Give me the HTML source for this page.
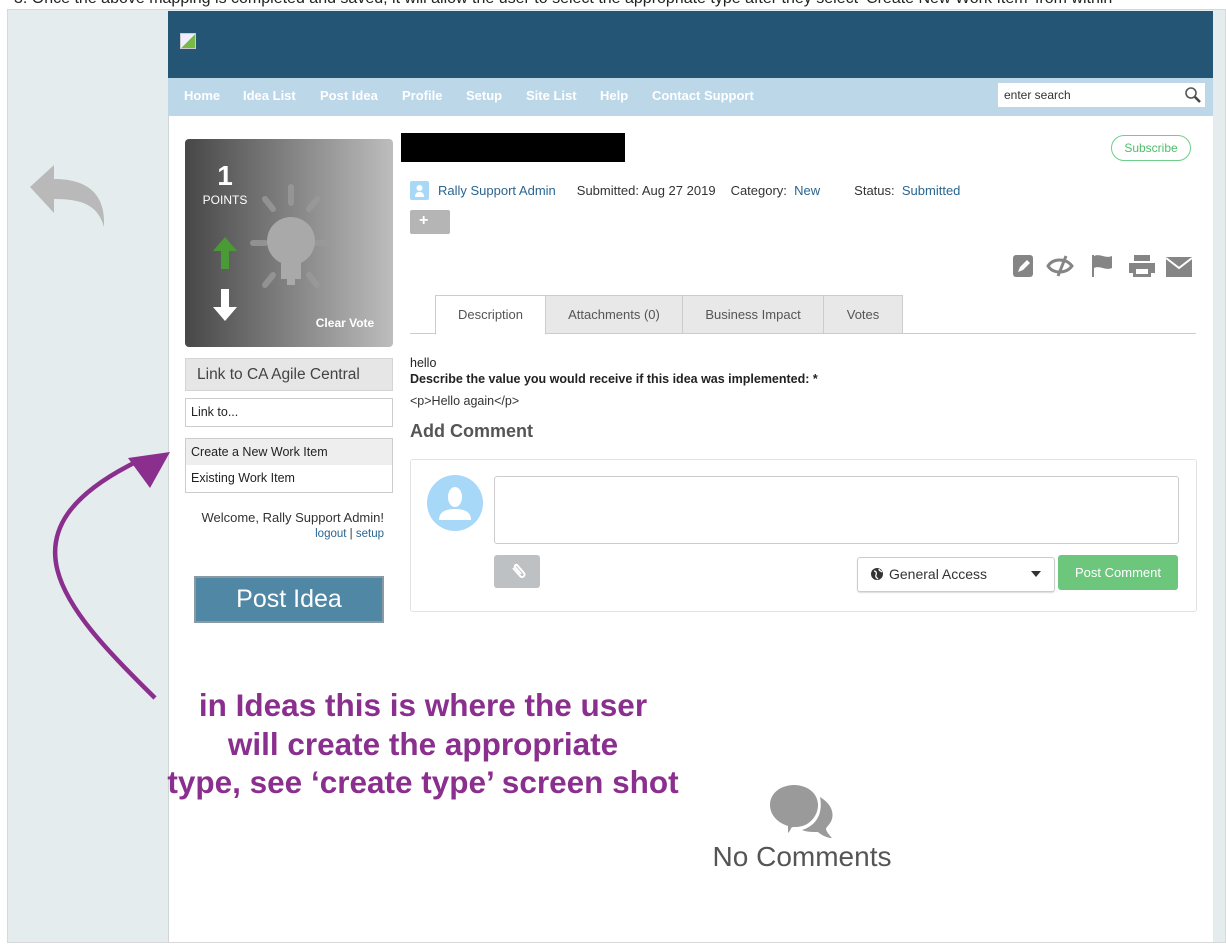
<!DOCTYPE html>
<html><head><meta charset="utf-8"><style>
*{margin:0;padding:0;box-sizing:border-box}
body{width:1226px;height:950px;position:relative;overflow:hidden;background:#fff;font-family:"Liberation Sans",Arial,sans-serif;color:#333}
.a{position:absolute}
.nav span{position:absolute;top:88px;color:#fff;font-weight:bold;font-size:13px}
.tab{position:absolute;top:295px;height:39px;border:1px solid #ccc;background:#e8e8e8;font-size:13px;color:#555;text-align:center;line-height:38px}
</style></head><body>
<div class="a" style="left:14px;top:-10px;font-size:16px;color:#222;white-space:nowrap">3. Once the above mapping is completed and saved, it will allow the user to select the appropriate type after they select ‘Create New Work Item’ from within</div>
<div class="a" style="left:7px;top:9px;width:1219px;height:934px;border:1px solid #d8d8d8;background:#e5ecee"></div>
<div class="a" style="left:168px;top:11px;width:1045px;height:931px;background:#fff;border-left:1px solid #d0d6d8"></div>
<div class="a" style="left:168px;top:11px;width:1045px;height:67px;background:#245574"></div>
<div class="a" style="left:180px;top:33px;width:16px;height:16px;background:linear-gradient(135deg,#eef 50%,#7b4 50%);border:1px solid #ccc"></div>
<div class="a" style="left:168px;top:78px;width:1045px;height:38px;background:#bcd7e8"></div>
<div class="nav"><span style="left:184px">Home</span><span style="left:243px">Idea List</span><span style="left:320px">Post Idea</span><span style="left:402px">Profile</span><span style="left:466px">Setup</span><span style="left:526px">Site List</span><span style="left:600px">Help</span><span style="left:652px">Contact Support</span></div>
<div class="a" style="left:998px;top:83px;width:207px;height:24px;background:#fff;font-size:12px;line-height:24px;padding-left:6px;color:#333">enter search</div>
<svg class="a" style="left:1184px;top:86px" width="18" height="18"><circle cx="7" cy="7" r="5" fill="none" stroke="#555" stroke-width="1.6"/><path d="M11 11l5 5" stroke="#444" stroke-width="2.5"/></svg>
<svg class="a" style="left:26px;top:160px" width="80" height="70"><path d="M4 27L28 5v14c30 0 52 12 50 48c-6-22-22-28-50-28v14z" fill="#b9b9b9"/></svg>
<div class="a" style="left:185px;top:139px;width:208px;height:208px;border-radius:4px;background:linear-gradient(90deg,#474747,#bdbdbd)"></div>
<svg class="a" style="left:185px;top:139px" width="208" height="208">
<g stroke="#9a9a9a" stroke-width="6" stroke-linecap="round" opacity=".8"><path d="M106 48v16M80 60l8 10M132 60l-8 10M68 104h12M132 104h12M80 146l8-10M132 146l-8-10"/></g>
<circle cx="106" cy="102" r="24" fill="#a9a9a9"/><rect x="96" y="120" width="20" height="20" fill="#a9a9a9"/><rect x="102" y="140" width="8" height="6" fill="#a9a9a9"/>
<path d="M40 98l-12 14h8v18h8v-18h8z" fill="#4a9a36"/>
<path d="M36 150v18h-8l12 14 12-14h-8v-18z" fill="#fff"/>
<text x="40" y="46" font-size="28" font-weight="bold" fill="#fff" text-anchor="middle" font-family="Liberation Sans">1</text>
<text x="40" y="65" font-size="12" fill="#fff" text-anchor="middle" font-family="Liberation Sans">POINTS</text>
<text x="160" y="188" font-size="12" font-weight="bold" fill="#fff" text-anchor="middle" font-family="Liberation Sans">Clear Vote</text>
</svg>
<div class="a" style="left:185px;top:358px;width:208px;height:33px;background:#e6e6e6;border:1px solid #d4d4d4;font-size:15.5px;line-height:32px;padding-left:11px;color:#444">Link to CA Agile Central</div>
<div class="a" style="left:185px;top:398px;width:208px;height:29px;border:1px solid #ccc;font-size:12.5px;line-height:27px;padding-left:5px;color:#222">Link to...</div>
<div class="a" style="left:185px;top:438px;width:208px;height:55px;border:1px solid #ccc;font-size:12.5px;color:#222">
<div style="height:26px;background:#eee;line-height:26px;padding-left:5px">Create a New Work Item</div>
<div style="height:27px;line-height:27px;padding-left:5px">Existing Work Item</div></div>
<div class="a" style="left:185px;top:510px;width:199px;text-align:right;font-size:13px;color:#333">Welcome, Rally Support Admin!</div>
<div class="a" style="left:185px;top:528px;width:199px;text-align:right;font-size:11.5px;color:#333"><span style="color:#2a6590">logout</span> | <span style="color:#2a6590">setup</span></div>
<div class="a" style="left:194px;top:576px;width:190px;height:47px;background:#4f87a5;border:2px solid #8a9aa4;color:#fff;font-size:25px;text-align:center;line-height:43px">Post Idea</div>
<div class="a" style="left:401px;top:133px;width:224px;height:29px;background:#000"></div>
<div class="a" style="left:1111px;top:135px;width:80px;height:26px;border:1px solid #6dd08a;border-radius:13px;color:#4cbf6a;font-size:12px;text-align:center;line-height:24px">Subscribe</div>
<div class="a" style="left:410px;top:181px;width:19px;height:19px;background:#a8d8f8;border-radius:2px"></div>
<svg class="a" style="left:410px;top:181px" width="19" height="19"><circle cx="9.5" cy="7" r="3" fill="#fff"/><path d="M5 16c0-4 2-5 4.5-5s4.5 1 4.5 5z" fill="#fff"/></svg>
<div class="a" style="left:438px;top:183px;font-size:13px;white-space:nowrap;color:#333"><span style="color:#2a6590">Rally Support Admin</span><span style="margin-left:21px">Submitted: Aug 27 2019</span><span style="margin-left:15px">Category:&nbsp; <span style="color:#2a6590">New</span></span><span style="margin-left:34px">Status:&nbsp; <span style="color:#2a6590">Submitted</span></span></div>
<div class="a" style="left:410px;top:210px;width:40px;height:24px;background:#b5b5b5;border-radius:2px;color:#fff;font-weight:bold;font-size:16px;line-height:22px;padding-left:9px">+</div>
<svg class="a" style="left:1010px;top:252px" width="185" height="28" fill="#858585">
<rect x="3" y="3" width="20" height="22" rx="3"/><path d="M8 20l2-5 7-7 3 3-7 7z" fill="#fff"/>
<path d="M38 14c5-8 18-8 24 0c-6 8-19 8-24 0z" fill="none" stroke="#858585" stroke-width="3"/><path d="M48 24l8-20" stroke="#858585" stroke-width="3"/>
<path d="M82 3v22h2V16c6-3 11 3 18 0V4c-7 3-12-3-18 0V3z"/>
<path d="M124 9h16v-6h-16zM119 11h26v10h-4v4h-18v-4h-4z"/><rect x="126" y="17" width="12" height="5" fill="#fff"/>
<path d="M156 5h26v20h-26z"/><path d="M156 6l13 10 13-10" fill="none" stroke="#fff" stroke-width="2"/>
</svg>
<div class="a" style="left:410px;top:333px;width:786px;height:1px;background:#ccc"></div>
<div class="tab" style="left:435px;width:111px;background:#fff;border-bottom-color:#fff;height:40px">Description</div>
<div class="tab" style="left:545px;width:138px">Attachments (0)</div>
<div class="tab" style="left:682px;width:142px">Business Impact</div>
<div class="tab" style="left:823px;width:80px">Votes</div>
<div class="a" style="left:410px;top:356px;font-size:12.5px;color:#222">hello</div>
<div class="a" style="left:410px;top:372px;font-size:12.5px;font-weight:bold;color:#222">Describe the value you would receive if this idea was implemented: *</div>
<div class="a" style="left:410px;top:394px;font-size:12.5px;color:#333">&lt;p&gt;Hello again&lt;/p&gt;</div>
<div class="a" style="left:410px;top:421px;font-size:18px;font-weight:bold;color:#555">Add Comment</div>
<div class="a" style="left:410px;top:459px;width:787px;height:153px;border:1px solid #e2e2e2;border-radius:3px"></div>
<svg class="a" style="left:427px;top:475px" width="56" height="56"><circle cx="28" cy="28" r="28" fill="#a8d8f8"/><ellipse cx="28" cy="22" rx="7" ry="10" fill="#fff"/><path d="M12 45c0-9 8-11 16-11s16 2 16 11z" fill="#fff"/></svg>
<div class="a" style="left:494px;top:476px;width:685px;height:68px;border:1px solid #ccc;border-radius:3px"></div>
<div class="a" style="left:494px;top:555px;width:46px;height:33px;background:#bdc1c4;border-radius:3px"></div>
<svg class="a" style="left:509px;top:562px" width="18" height="18"><path d="M4 6l7 8a2.5 2.5 0 0 0 4-3L8 3a1.5 1.5 0 0 0-2 2l6 7" fill="none" stroke="#fff" stroke-width="2"/></svg>
<div class="a" style="left:857px;top:557px;width:198px;height:35px;border:1px solid #ccc;border-radius:3px;box-shadow:0 1px 1px #ddd;font-size:14px;line-height:33px;padding-left:31px;color:#333">General Access</div>
<svg class="a" style="left:870px;top:567px" width="14" height="14"><circle cx="7" cy="7" r="6" fill="#333"/><path d="M4 4c2 0 3 2 2 4s1 3 2 4M9 2c0 2 2 2 3 3" stroke="#fff" stroke-width="1.3" fill="none"/></svg>
<svg class="a" style="left:1031px;top:571px" width="10" height="6"><path d="M0 0h10L5 6z" fill="#333"/></svg>
<div class="a" style="left:1058px;top:555px;width:120px;height:35px;background:#6cc77d;border-radius:3px;color:#fff;font-size:13px;text-align:center;line-height:35px">Post Comment</div>
<svg class="a" style="left:0;top:430px" width="200" height="290"><path d="M155 268C60 175 -5 100 140 30" fill="none" stroke="#8a2f8e" stroke-width="4.5"/><path d="M170 22L150 58L128 28z" fill="#8a2f8e"/></svg>
<div class="a" style="left:123px;top:686px;width:600px;text-align:center;font-size:31.5px;font-weight:bold;color:#8a2f8e;line-height:38.5px;white-space:nowrap">in Ideas this is where the user<br>will create the appropriate<br>type, see ‘create type’ screen shot</div>
<svg class="a" style="left:768px;top:783px" width="70" height="56"><path d="M28 44l-2 0c-4 0-2 2-6 6l0-7C10 40 2 32 2 22C2 10 13 2 26 2S50 10 50 22S40 44 28 44z" fill="#9a9a9a"/><path d="M52 14c10 6 14 14 12 22c-2 6-6 8-6 10c0 2 4 7 6 9c-6 0-12-4-14-6c-6 0-12 0-16-2c10-3 22-12 18-33z" fill="#9a9a9a"/></svg>
<div class="a" style="left:680px;top:841px;width:244px;text-align:center;font-size:28px;color:#555">No Comments</div>
</body></html>
